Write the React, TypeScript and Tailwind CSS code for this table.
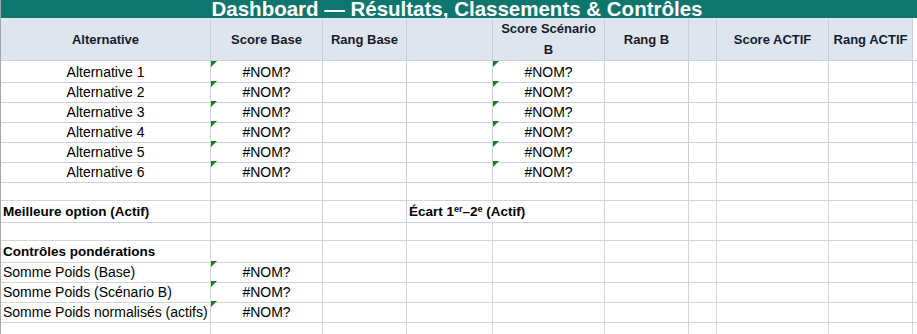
import React from "react";

type CellProps = {
  children?: React.ReactNode;
  align?: "left" | "center";
  bold?: boolean;
  flag?: boolean;
  tone?: "blue" | "gray";
  span2?: boolean;
  last?: boolean;
  head?: boolean;
};

const Cell = ({ children, align = "left", bold, flag, tone = "gray", span2, last, head }: CellProps) => {
  const line = tone === "blue" ? "border-[#c6d0de]" : "border-[#d4d4d4]";
  return (
    <div
      className={`relative flex items-center whitespace-nowrap border-b ${last ? "" : "border-r"} ${line} ${
        span2 ? "col-span-2" : ""
      } ${align === "center" ? "justify-center text-center" : "justify-start pl-[2px]"} ${
        bold ? "font-bold text-[13.5px]" : "text-[14px]"
      } ${head ? "bg-[#dfe5ee] text-[#161b2e] leading-[20px]" : "text-black leading-[20px] pt-[1px]"}`}
    >
      {flag && (
        <span className="absolute left-0 top-0 h-0 w-0 border-t-[6px] border-r-[6px] border-t-[#1a7f1a] border-r-transparent" />
      )}
      {children}
    </div>
  );
};

const EmptyRow = ({ tone = "gray", h = "h-[20px]" }: { tone?: "blue" | "gray"; h?: string }) => (
  <div className={`col-span-10 grid grid-cols-subgrid ${h}`}>
    {Array.from({ length: 10 }).map((_, i) => (
      <Cell key={i} tone={tone} last={i === 9} />
    ))}
  </div>
);

const headers = ["Alternative", "Score Base", "Rang Base", "", "SCEN", "Rang B", "", "Score ACTIF", "Rang ACTIF"];

const App = () => {
  return (
    <div className="w-[917px] h-[334px] overflow-hidden bg-white border-l border-[#a6a6a6] font-['Liberation_Sans',Arial,sans-serif]">
      <div className="grid grid-cols-[210px_112px_84px_86px_112px_84px_28px_112px_84px_4px]">
        {/* title band */}
        <div className="col-span-10 h-[18px] bg-[#0f766e] flex justify-center pr-[4px] overflow-visible">
          <span className="text-white font-bold text-[20.5px] leading-[18px] whitespace-nowrap">
            Dashboard — Résultats, Classements &amp; Contrôles
          </span>
        </div>

        {/* header row */}
        <div className="col-span-10 grid grid-cols-subgrid h-[43px]">
          {headers.map((h, i) => (
            <div
              key={i}
              className="flex items-center justify-center text-center border-r border-b border-[#c6d0de] bg-[#dfe5ee] text-[#161b2e] font-bold text-[13px] leading-[21px]"
            >
              {h === "SCEN" ? (
                <span>
                  Score Scénario
                  <br />B
                </span>
              ) : (
                h
              )}
            </div>
          ))}
          <div className="border-b border-[#d4d4d4]" />
        </div>

        {/* alternatives */}
        {[1, 2, 3, 4, 5, 6].map((n) => (
          <div key={n} className="col-span-10 grid grid-cols-subgrid h-[20px]">
            <Cell tone="blue" align="center">Alternative {n}</Cell>
            <Cell tone="blue" align="center" flag>#NOM?</Cell>
            <Cell tone="blue" />
            <Cell tone="blue" />
            <Cell tone="blue" align="center" flag>#NOM?</Cell>
            <Cell tone="blue" />
            <Cell tone="blue" />
            <Cell tone="blue" />
            <Cell tone="blue" />
            <Cell last />
          </div>
        ))}

        <EmptyRow />

        {/* best option */}
        <div className="col-span-10 grid grid-cols-subgrid h-[20px]">
          <Cell bold tone="blue">Meilleure option (Actif)</Cell>
          <Cell tone="blue" />
          <Cell tone="blue" />
          <Cell bold tone="blue" span2>
            <span>
              Écart 1<sup className="text-[9px] font-bold">er</sup>–2<sup className="text-[9px] font-bold">e</sup> (Actif)
            </span>
          </Cell>
          <Cell />
          <Cell />
          <Cell />
          <Cell />
          <Cell last />
        </div>

        <EmptyRow />

        <div className="col-span-10 grid grid-cols-subgrid h-[20px]">
          <Cell bold>Contrôles pondérations</Cell>
          {Array.from({ length: 9 }).map((_, i) => (
            <Cell key={i} last={i === 8} />
          ))}
        </div>

        {["Somme Poids (Base)", "Somme Poids (Scénario B)", "Somme Poids normalisés (actifs)"].map((label) => (
          <div key={label} className="col-span-10 grid grid-cols-subgrid h-[20px]">
            <Cell>{label}</Cell>
            <Cell align="center" flag>#NOM?</Cell>
            {Array.from({ length: 8 }).map((_, i) => (
              <Cell key={i} last={i === 7} />
            ))}
          </div>
        ))}

        <EmptyRow h="h-[20px]" />
      </div>
    </div>
  );
};

export default App;
